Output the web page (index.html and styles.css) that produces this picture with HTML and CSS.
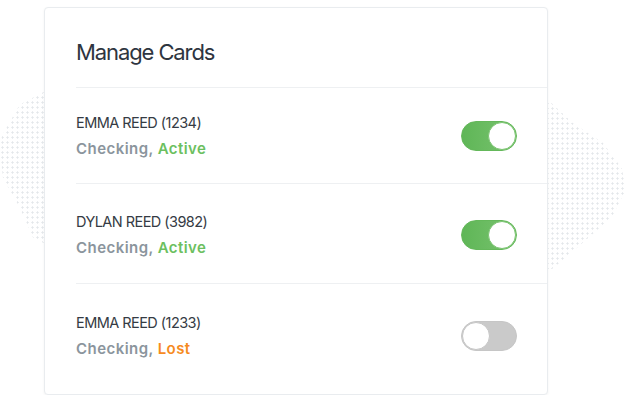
FILE: index.html
```html
<!DOCTYPE html>
<html lang="en">
<head>
    <meta charset="UTF-8">
    <meta name="viewport" content="width=device-width, initial-scale=1.0">
    <title>Manage Cards</title>
    <link rel="stylesheet" href="styles.css">
</head>
<body>
    <div class="dots dots-left" aria-hidden="true"></div>
    <div class="dots dots-right" aria-hidden="true"></div>

    <section class="panel">
        <header class="panel-head">
            <h1>Manage Cards</h1>
        </header>

        <ul class="card-list">
            <li class="card-row">
                <div class="card-info">
                    <p class="card-name">EMMA REED (1234)</p>
                    <p class="card-meta">Checking, <span class="status active">Active</span></p>
                </div>
                <span class="toggle on" role="switch" aria-checked="true"><span class="knob"></span></span>
            </li>
            <li class="card-row">
                <div class="card-info">
                    <p class="card-name">DYLAN REED (3982)</p>
                    <p class="card-meta">Checking, <span class="status active">Active</span></p>
                </div>
                <span class="toggle on" role="switch" aria-checked="true"><span class="knob"></span></span>
            </li>
            <li class="card-row">
                <div class="card-info">
                    <p class="card-name">EMMA REED (1233)</p>
                    <p class="card-meta">Checking, <span class="status lost">Lost</span></p>
                </div>
                <span class="toggle" role="switch" aria-checked="false"><span class="knob"></span></span>
            </li>
        </ul>
    </section>
</body>
</html>
```

FILE: styles.css
```css
body {
    font-family: Inter, "Noto Sans", sans-serif;
    margin: 0;
    padding: 7px 0 0 44px;
    background: #fff;
    color: #333a43;
}

/* dotted shapes peeking out behind the panel */
.dots {
    position: absolute;
    background-image: radial-gradient(circle, #e4e7ea 0.9px, transparent 1.3px);
    background-size: 5px 5px;
    z-index: 0;
}
.dots-left {
    left: 0;
    top: 80px;
    width: 60px;
    height: 175px;
    clip-path: polygon(100% 2%, 33% 14%, 3% 32%, 0 41%, 5% 56%, 33% 73%, 55% 90%, 100% 98%);
}
.dots-right {
    left: 540px;
    top: 96px;
    width: 86px;
    height: 180px;
    clip-path: polygon(9% 2%, 38% 15%, 73% 26%, 95% 40%, 100% 52%, 84% 67%, 58% 78%, 27% 91%, 9% 98%);
}

.panel {
    position: relative;
    z-index: 1;
    width: 502px;
    height: 386px;
    background: #fff;
    border: 1px solid #e9ecef;
    border-radius: 4px;
    box-shadow: 0 1px 3px rgba(0, 0, 0, 0.05);
}

.panel-head {
    margin-left: 31px;
    padding: 30px 0 21px;
    border-bottom: 1px solid #eef0f2;
}
.panel-head h1 {
    margin: 0;
    font-size: 22px;
    line-height: 28px;
    font-weight: 400;
    letter-spacing: -1.1px;
    color: #2e3540;
}

.card-list {
    list-style: none;
    margin: 0;
    padding: 0;
}
.card-row {
    display: flex;
    align-items: center;
    justify-content: space-between;
    margin-left: 31px;
    padding: 26px 30px 26px 0;
    border-bottom: 1px solid #eef0f2;
}
.card-row:first-child {
    padding-bottom: 25px;
}
.card-row:nth-child(2) {
    padding-top: 29px;
}
.card-row:last-child {
    padding-top: 30px;
    border-bottom: none;
}

.card-name {
    margin: 0;
    font-size: 14.5px;
    line-height: 18px;
    color: #353b44;
    letter-spacing: -0.55px;
}
.card-meta {
    margin: 8px 0 0;
    font-size: 15px;
    line-height: 18px;
    font-weight: 600;
    letter-spacing: 0.45px;
    color: #8b959d;
}
.status.active {
    color: #6cbf60;
}
.status.lost {
    color: #f68b1f;
}

.toggle {
    display: flex;
    width: 54px;
    height: 28px;
    border: 1px solid #c6c6c6;
    border-radius: 15px;
    background: #cacaca;
}
.toggle.on {
    justify-content: flex-end;
    border-color: #64b85a;
    background: linear-gradient(90deg, #5fb657, #79c36f);
}
.toggle .knob {
    width: 28px;
    height: 28px;
    border: 1px solid #c6c6c6;
    border-radius: 50%;
    background: #fff;
    box-sizing: border-box;
}
.toggle.on .knob {
    border-color: #7cc472;
}
```
